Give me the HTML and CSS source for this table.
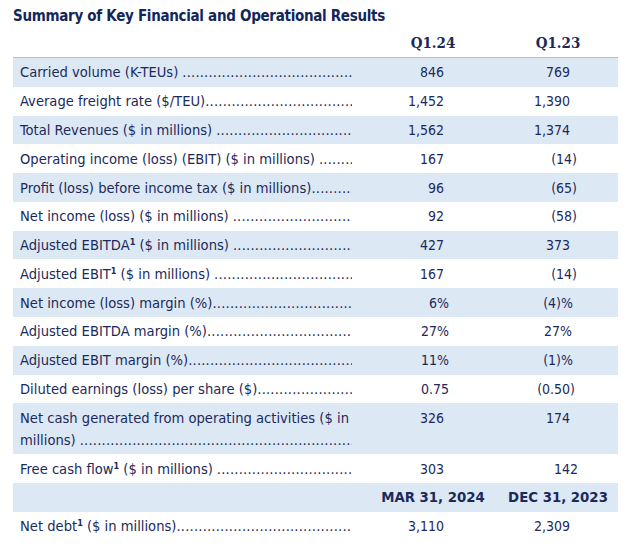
FILE: index.html
```html
<!DOCTYPE html>
<html>
<head>
<meta charset="utf-8">
<link rel="stylesheet" href="styles.css">
</head>
<body>
<div class="page">
  <h1 class="title">Summary of Key Financial and Operational Results</h1>
  <div class="table">
    <div class="row head">
      <div class="label"></div>
      <div class="val c1">Q1.24</div>
      <div class="val c2">Q1.23</div>
    </div>
    <div class="row shade">
      <div class="label"><span class="txt sp">Carried volume (K-TEUs)</span><span class="dots"></span></div>
      <div class="val c1">846</div>
      <div class="val c2">769</div>
    </div>
    <div class="row">
      <div class="label"><span class="txt">Average freight rate ($/TEU)</span><span class="dots"></span></div>
      <div class="val c1">1,452</div>
      <div class="val c2">1,390</div>
    </div>
    <div class="row shade">
      <div class="label"><span class="txt sp">Total Revenues ($ in millions)</span><span class="dots"></span></div>
      <div class="val c1">1,562</div>
      <div class="val c2">1,374</div>
    </div>
    <div class="row">
      <div class="label"><span class="txt sp">Operating income (loss) (EBIT) ($ in millions)</span><span class="dots"></span></div>
      <div class="val c1">167</div>
      <div class="val c2 neg">(14)</div>
    </div>
    <div class="row shade">
      <div class="label"><span class="txt">Profit (loss) before income tax ($ in millions)</span><span class="dots"></span></div>
      <div class="val c1">96</div>
      <div class="val c2 neg">(65)</div>
    </div>
    <div class="row">
      <div class="label"><span class="txt sp">Net income (loss) ($ in millions)</span><span class="dots"></span></div>
      <div class="val c1">92</div>
      <div class="val c2 neg">(58)</div>
    </div>
    <div class="row shade">
      <div class="label"><span class="txt sp">Adjusted EBITDA<sup>1</sup> ($ in millions)</span><span class="dots"></span></div>
      <div class="val c1">427</div>
      <div class="val c2">373</div>
    </div>
    <div class="row">
      <div class="label"><span class="txt sp">Adjusted EBIT<sup>1</sup> ($ in millions)</span><span class="dots"></span></div>
      <div class="val c1">167</div>
      <div class="val c2 neg">(14)</div>
    </div>
    <div class="row shade">
      <div class="label"><span class="txt">Net income (loss) margin (%)</span><span class="dots"></span></div>
      <div class="val c1 pct">6%</div>
      <div class="val c2 pctneg">(4)%</div>
    </div>
    <div class="row">
      <div class="label"><span class="txt">Adjusted EBITDA margin (%)</span><span class="dots"></span></div>
      <div class="val c1 pct">27%</div>
      <div class="val c2 pct">27%</div>
    </div>
    <div class="row shade">
      <div class="label"><span class="txt">Adjusted EBIT margin (%)</span><span class="dots"></span></div>
      <div class="val c1 pct">11%</div>
      <div class="val c2 pctneg">(1)%</div>
    </div>
    <div class="row">
      <div class="label"><span class="txt">Diluted earnings (loss) per share ($)</span><span class="dots"></span></div>
      <div class="val c1 pct">0.75</div>
      <div class="val c2 decneg">(0.50)</div>
    </div>
    <div class="row shade tall">
      <div class="label multi">
        <div class="line">Net cash generated from operating activities ($ in</div>
        <div class="line lead"><span class="txt sp">millions)</span><span class="dots"></span></div>
      </div>
      <div class="val c1">326</div>
      <div class="val c2">174</div>
    </div>
    <div class="row">
      <div class="label"><span class="txt sp">Free cash flow<sup>1</sup> ($ in millions)</span><span class="dots"></span></div>
      <div class="val c1">303</div>
      <div class="val c2 shift">142</div>
    </div>
    <div class="row shade head2">
      <div class="label"></div>
      <div class="val c1 date">MAR 31, 2024</div>
      <div class="val c2 date">DEC 31, 2023</div>
    </div>
    <div class="row">
      <div class="label"><span class="txt">Net debt<sup>1</sup> ($ in millions)</span><span class="dots"></span></div>
      <div class="val c1">3,110</div>
      <div class="val c2">2,309</div>
    </div>
  </div>
</div>
</body>
</html>
```

FILE: styles.css
```css
html, body {
  margin: 0;
  padding: 0;
  background: #ffffff;
}

.page {
  padding: 0 0 0 13px;
  font-family: "DejaVu Sans Condensed", "DejaVu Sans", sans-serif;
  color: #1b2a5a;
}

.title {
  margin: 0;
  padding: 7px 0 0 0;
  height: 23px;
  font-size: 15px;
  font-weight: bold;
  line-height: 18px;
  color: #13265a;
  letter-spacing: -0.3px;
}

.table {
  width: 605px;
  font-size: 14px;
}

.row {
  display: grid;
  grid-template-columns: 355px 130px 120px;
  align-items: start;
  line-height: 22px;
  padding: 3.4px 0;
}

.shade {
  background: #dde8f5;
}

.head {
  height: 20.6px;
  padding-top: 2px;
  padding-bottom: 4.4px;
  border-bottom: 1px solid #9fc4e6;
  font-weight: bold;
  font-family: "DejaVu Serif Condensed", "DejaVu Serif", serif;
  font-size: 15px;
}

.head .val {
  text-align: center;
  padding: 0;
}

.head2 .val {
  text-align: center;
  padding: 0;
  font-weight: bold;
  font-size: 14.8px;
}

.label {
  padding-left: 7px;
  display: flex;
  white-space: nowrap;
  overflow: hidden;
  width: 332px;
  font-size: 14.6px;
}

.label.multi {
  display: block;
}

.line.lead {
  display: flex;
  overflow: hidden;
}

.txt {
  flex: none;
}

.txt.sp {
  margin-right: 4px;
}

.dots {
  flex: 1;
  overflow: hidden;
  letter-spacing: 0.2px;
}

.dots::after {
  content: "..............................................................................................................................................................";
}

sup {
  font-size: 9px;
  line-height: 0;
  vertical-align: 5px;
  font-weight: bold;
}

.val {
  text-align: right;
}

.c1 {
  padding-right: 54px;
}

.c2 {
  padding-right: 48px;
}

.c1.pct {
  padding-right: 49px;
}

.c2.neg {
  padding-right: 41px;
}

.c2.pct {
  padding-right: 46px;
}

.c2.pctneg {
  padding-right: 45px;
}

.c2.decneg {
  padding-right: 43px;
}

.c2.shift {
  padding-right: 40px;
}
```
